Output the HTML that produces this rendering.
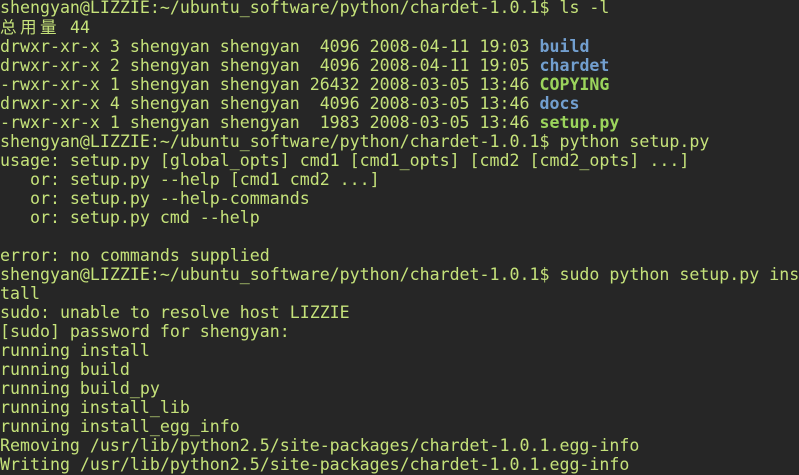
<!DOCTYPE html>
<html><head><meta charset="utf-8"><style>
html,body{margin:0;padding:0;background:#262626;width:799px;height:475px;overflow:hidden}
pre{margin:0;padding:0;position:absolute;top:-2px;left:0;font-family:"DejaVu Sans Mono","Liberation Mono","Noto Sans CJK SC",monospace;font-size:16.6px;line-height:19px;color:#c5e27a;white-space:pre}
.b{color:#729fcf;font-weight:bold}
.g{color:#8ae234;font-weight:bold;color:#9bd45c}
.c{display:inline-block;width:20px;font-family:"Noto Sans CJK SC",sans-serif}
</style></head><body><pre>shengyan@LIZZIE:~/ubuntu_software/python/chardet-1.0.1$ ls -l
<span class="c">总</span><span class="c">用</span><span class="c">量</span> 44
drwxr-xr-x 3 shengyan shengyan  4096 2008-04-11 19:03 <span class="b">build</span>
drwxr-xr-x 2 shengyan shengyan  4096 2008-04-11 19:05 <span class="b">chardet</span>
-rwxr-xr-x 1 shengyan shengyan 26432 2008-03-05 13:46 <span class="g">COPYING</span>
drwxr-xr-x 4 shengyan shengyan  4096 2008-03-05 13:46 <span class="b">docs</span>
-rwxr-xr-x 1 shengyan shengyan  1983 2008-03-05 13:46 <span class="g">setup.py</span>
shengyan@LIZZIE:~/ubuntu_software/python/chardet-1.0.1$ python setup.py
usage: setup.py [global_opts] cmd1 [cmd1_opts] [cmd2 [cmd2_opts] ...]
   or: setup.py --help [cmd1 cmd2 ...]
   or: setup.py --help-commands
   or: setup.py cmd --help

error: no commands supplied
shengyan@LIZZIE:~/ubuntu_software/python/chardet-1.0.1$ sudo python setup.py ins
tall
sudo: unable to resolve host LIZZIE
[sudo] password for shengyan:
running install
running build
running build_py
running install_lib
running install_egg_info
Removing /usr/lib/python2.5/site-packages/chardet-1.0.1.egg-info
Writing /usr/lib/python2.5/site-packages/chardet-1.0.1.egg-info
</pre></body></html>
